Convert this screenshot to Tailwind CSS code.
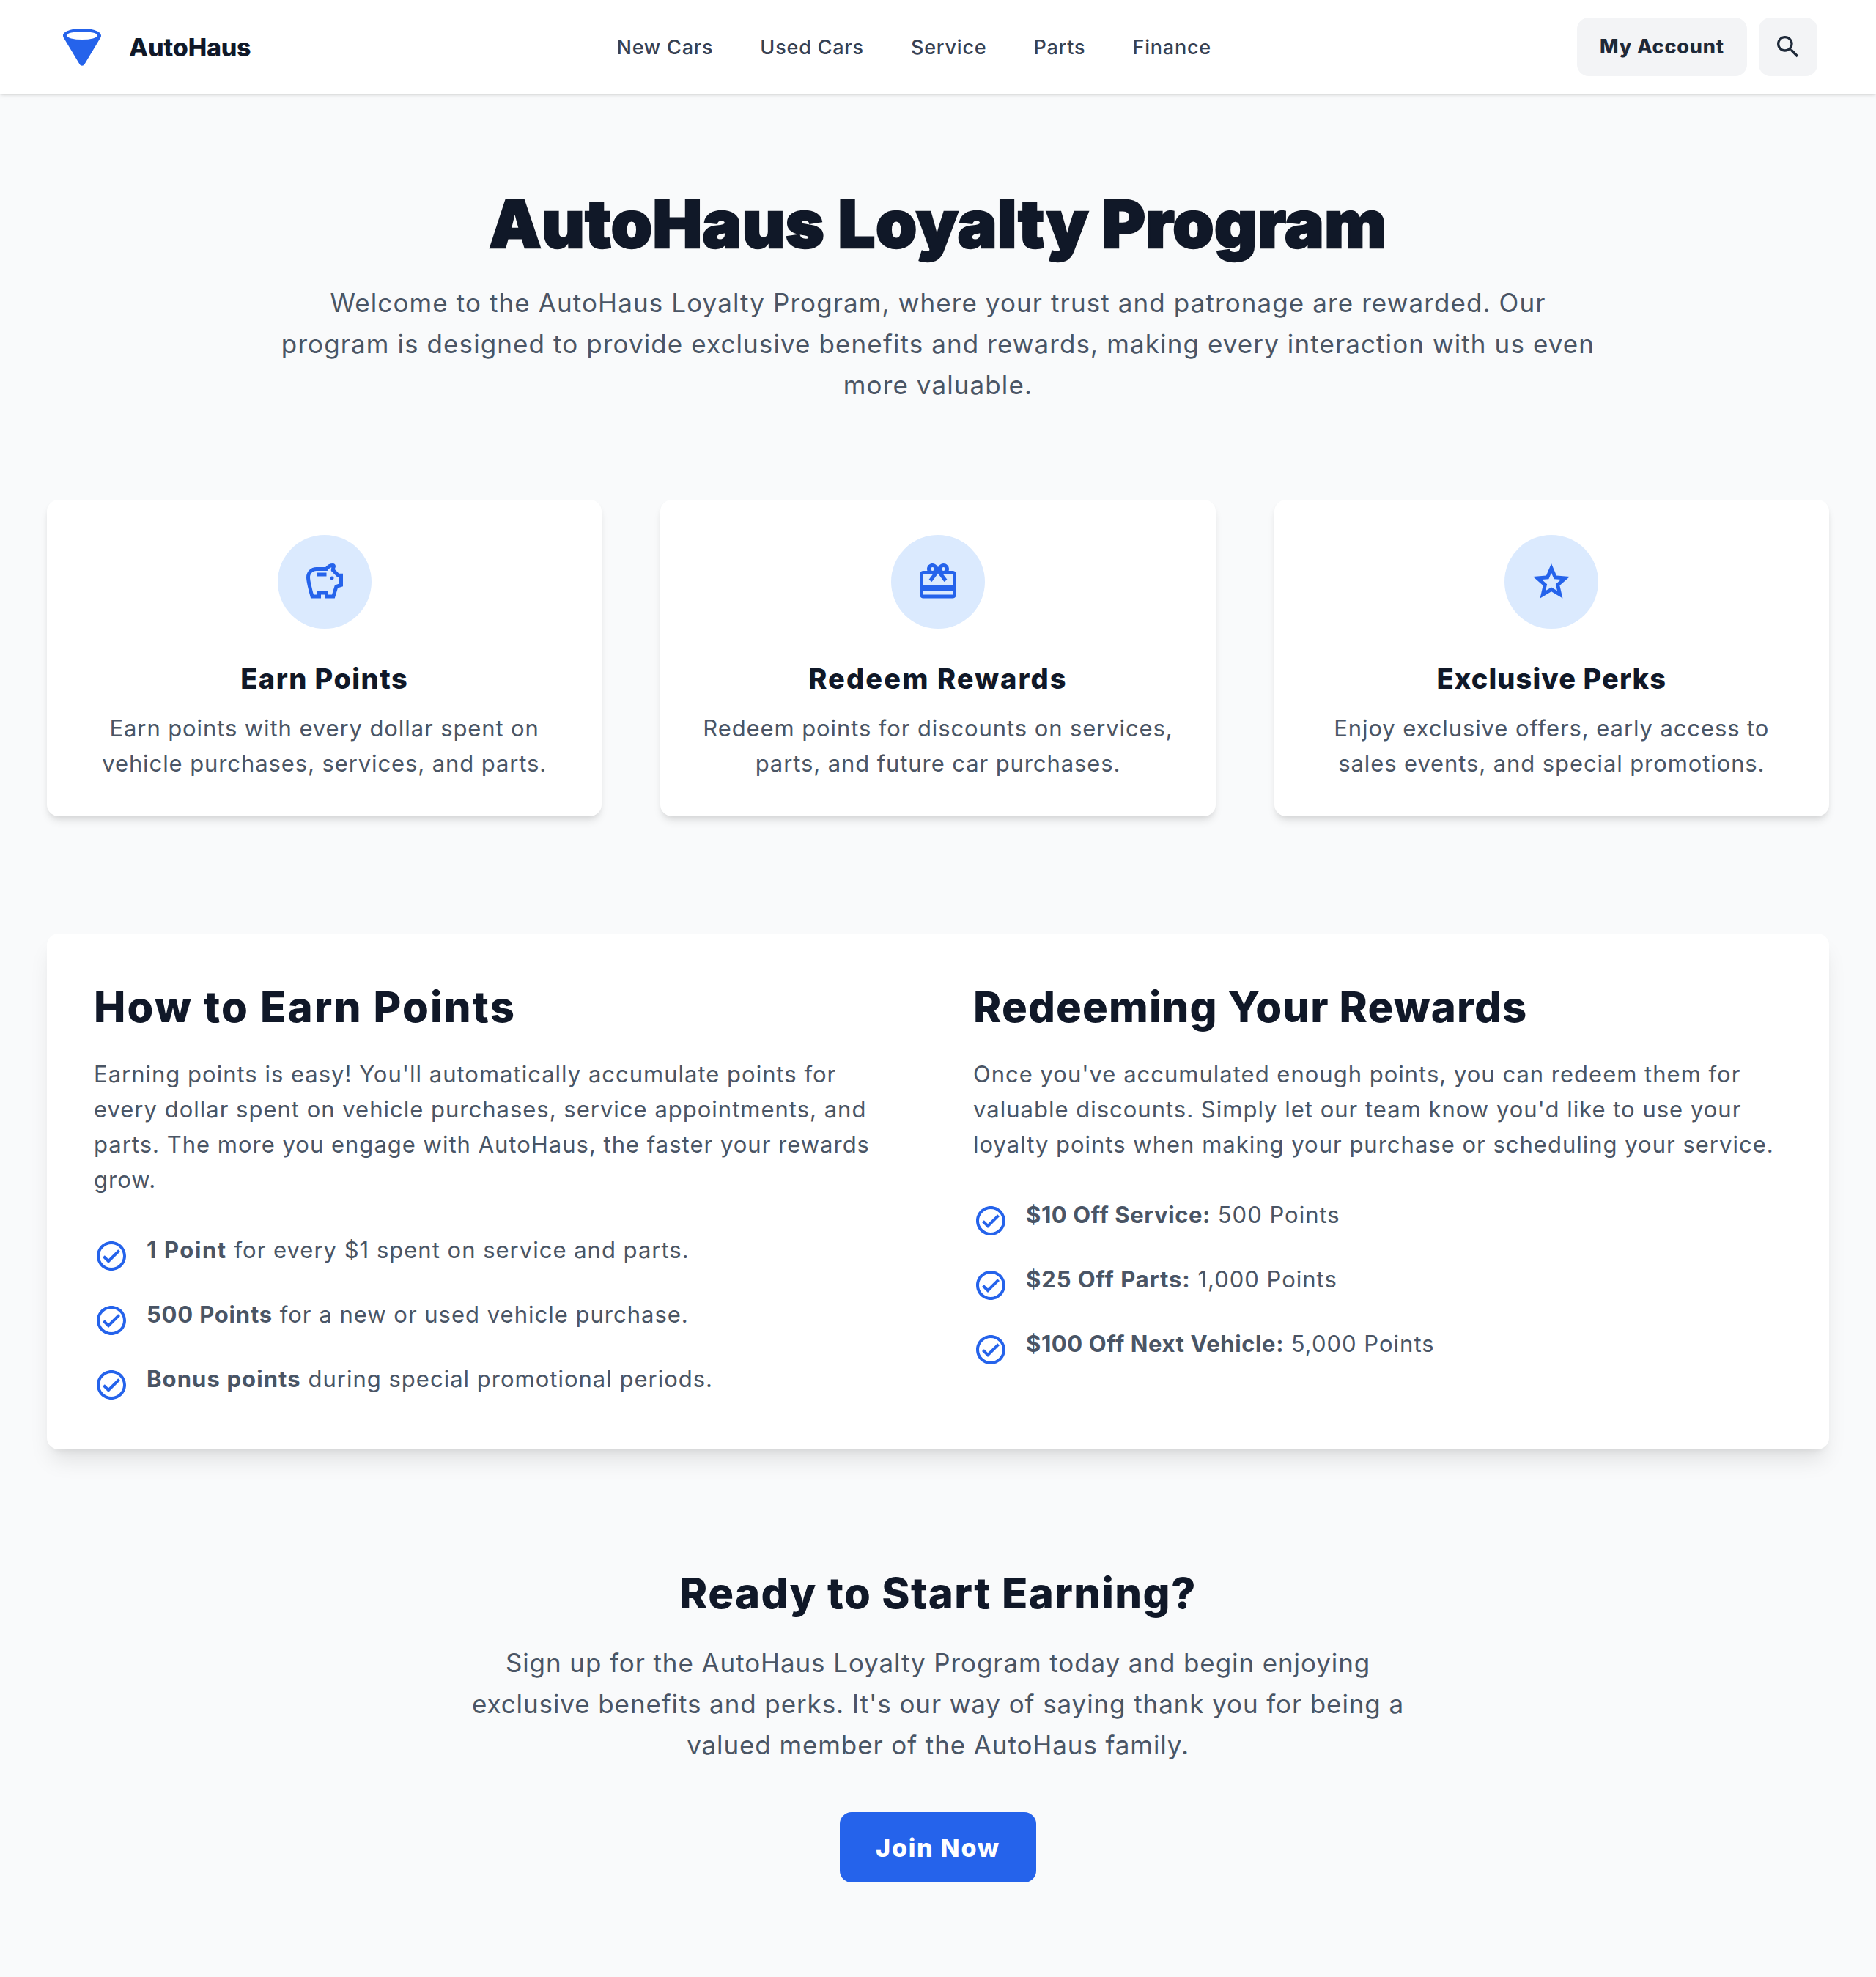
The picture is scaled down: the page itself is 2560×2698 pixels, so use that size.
<!DOCTYPE html>
<html lang="en">
<head>
  <meta charset="UTF-8">
  <title>AutoHaus Loyalty Program</title>
  <script src="https://cdn.jsdelivr.net/npm/@tailwindcss/browser@4"></script>
</head>
<body class="bg-gray-50 font-['Inter',sans-serif] text-gray-900">

  <header class="h-[128px] bg-white shadow-[0_2px_6px_0_rgb(0_0_0/0.1),0_2px_4px_-2px_rgb(0_0_0/0.1)] flex items-center justify-between pl-[85px] pr-[80px] relative">
    <div class="flex items-center gap-[37px]">
      <svg class="w-[54px] h-[54px]" viewBox="0 0 54 54" fill="none">
        <path d="M27 2C12 2 1 6 1 11.5c0 1.5.5 2.5 1.2 3.6L23.5 50.5c1.8 3 5.2 3 7 0l21.300-35.400C52.500 14 53 13 53 11.500 53 6 42 2 27 2z" fill="#2563eb"/>
        <ellipse cx="27" cy="11.500" rx="21" ry="5.500" fill="#fff"/>
      </svg>
      <span class="text-[34px] font-extrabold tracking-[-0.2px]">AutoHaus</span>
    </div>
    <nav class="flex items-center gap-[64px] pt-[2px] text-[27px] font-medium text-gray-700 tracking-[0.8px]">
      <a>New Cars</a>
      <a>Used Cars</a>
      <a>Service</a>
      <a>Parts</a>
      <a>Finance</a>
    </nav>
    <div class="flex items-center gap-[16px]">
      <button class="h-[80px] w-[232px] rounded-[16px] bg-gray-100 text-[27px] font-extrabold text-gray-800 tracking-[0.8px]">My Account</button>
      <button class="h-[80px] w-[80px] rounded-[16px] bg-gray-100 flex items-center justify-center">
        <svg class="w-[40px] h-[40px] text-gray-800" viewBox="0 0 24 24" fill="currentColor"><path d="M15.500 14h-.79l-.28-.27A6.470 6.470 0 0 0 16 9.500 6.500 6.500 0 1 0 9.500 16c1.610 0 3.090-.59 4.230-1.570l.27.280v.790l5 4.990L20.490 19l-4.990-5zm-6 0C7.010 14 5 11.990 5 9.500S7.010 5 9.500 5 14 7.010 14 9.500 11.990 14 9.500 14z"/></svg>
      </button>
    </div>
  </header>

  <main class="px-[64px] pt-[128px] pb-[128px]">
    <section class="text-center">
      <h1 class="text-[90px] leading-[100px] font-black tracking-[0.5px] [-webkit-text-stroke:2.5px_#111827]">AutoHaus Loyalty Program</h1>
      <p class="mt-[29px] mx-auto w-[1800px] text-[35px] leading-[56px] text-gray-600 tracking-[1.1px]">Welcome to the AutoHaus Loyalty Program, where your trust and patronage are rewarded. Our program is designed to provide exclusive benefits and rewards, making every interaction with us even more valuable.</p>
    </section>

    <section class="mt-[129px] grid grid-cols-3 gap-[80px]">
      <div class="bg-white rounded-[16px] shadow-[0_8px_12px_-2px_rgb(0_0_0/0.1),0_4px_8px_-4px_rgb(0_0_0/0.1)] p-[48px] text-center">
        <div class="w-[128px] h-[128px] mx-auto rounded-full bg-blue-100 flex items-center justify-center">
          <svg class="w-[60px] h-[60px] text-[#2563eb]" viewBox="0 0 24 24" fill="currentColor"><path d="M15 10c0-.55.45-1 1-1s1 .45 1 1-.45 1-1 1-1-.45-1-1zM8 9h5V7H8v2zm14-1.500v6.970l-2.820.94L17.500 21H12v-2h-2v2H4.500S2 12.540 2 9.500 4.460 4 7.500 4h5c.91-1.210 2.370-2 4-2 .83 0 1.500.67 1.500 1.500 0 .21-.04.40-.12.58-.14.32-.26.69-.32 1.090l2.270 2.330H22zm-2 2h-1l-3.500-3.500c0-.65.09-1.290.26-1.900-.97.25-1.770.92-2.210 1.790L13.500 6h-6C5.570 6 4 7.570 4 9.500c0 1.880 1.220 6.650 2.010 9.500H8v-2h6v2h2.010l1.560-5.190 2.430-.82V9.500z"/></svg>
        </div>
        <h3 class="mt-[40px] text-[38px] leading-[56px] font-extrabold tracking-[1.45px]">Earn Points</h3>
        <p class="mt-[16px] text-[31px] leading-[48px] text-gray-600 tracking-[0.9px]">Earn points with every dollar spent on vehicle purchases, services, and parts.</p>
      </div>
      <div class="bg-white rounded-[16px] shadow-[0_8px_12px_-2px_rgb(0_0_0/0.1),0_4px_8px_-4px_rgb(0_0_0/0.1)] p-[48px] text-center">
        <div class="w-[128px] h-[128px] mx-auto rounded-full bg-blue-100 flex items-center justify-center">
          <svg class="w-[60px] h-[60px] text-[#2563eb]" viewBox="0 0 24 24" fill="currentColor"><path d="M20 6h-2.180c.11-.31.18-.65.18-1 0-1.660-1.340-3-3-3-1.050 0-1.960.54-2.500 1.350l-.5.67-.5-.68C10.960 2.540 10.050 2 9 2 7.340 2 6 3.340 6 5c0 .35.07.69.18 1H4c-1.110 0-1.990.89-1.990 2L2 19c0 1.110.89 2 2 2h16c1.110 0 2-.89 2-2V8c0-1.110-.89-2-2-2zm-5-2c.55 0 1 .45 1 1s-.45 1-1 1-1-.45-1-1 .45-1 1-1zM9 4c.55 0 1 .45 1 1s-.45 1-1 1-1-.45-1-1 .45-1 1-1zm11 15H4v-2h16v2zm0-5H4V8h5.080L7 10.830 8.620 12 11 8.760l1-1.360 1 1.360L15.380 12 17 10.830 14.920 8H20v6z"/></svg>
        </div>
        <h3 class="mt-[40px] text-[38px] leading-[56px] font-extrabold tracking-[2.1px]">Redeem Rewards</h3>
        <p class="mt-[16px] text-[31px] leading-[48px] text-gray-600 tracking-[0.9px]">Redeem points for discounts on services, parts, and future car purchases.</p>
      </div>
      <div class="bg-white rounded-[16px] shadow-[0_8px_12px_-2px_rgb(0_0_0/0.1),0_4px_8px_-4px_rgb(0_0_0/0.1)] p-[48px] text-center">
        <div class="w-[128px] h-[128px] mx-auto rounded-full bg-blue-100 flex items-center justify-center">
          <svg class="w-[60px] h-[60px] text-[#2563eb]" viewBox="0 0 24 24" fill="currentColor" fill-rule="evenodd"><path d="M22 9.240l-7.190-.62L12 2 9.190 8.630 2 9.240l5.460 4.730L5.820 21 12 17.270 18.180 21l-1.630-7.030L22 9.240zM12 14.980L8.800 16.910 9.650 13.270 6.830 10.820 10.560 10.500 12 7.070 13.450 10.500 17.170 10.830 14.350 13.280 15.200 16.920z"/></svg>
        </div>
        <h3 class="mt-[40px] text-[38px] leading-[56px] font-extrabold tracking-[1.1px]">Exclusive Perks</h3>
        <p class="mt-[16px] text-[31px] leading-[48px] text-gray-600 tracking-[0.9px]">Enjoy exclusive offers, early access to sales events, and special promotions.</p>
      </div>
    </section>

    <section class="mt-[160px] bg-white rounded-[16px] shadow-[0_20px_30px_-6px_rgb(0_0_0/0.1),0_8px_12px_-8px_rgb(0_0_0/0.1)] p-[64px] grid grid-cols-2 gap-[96px]">
      <div>
        <h2 class="text-[58px] leading-[72px] font-extrabold tracking-[2.2px]">How to Earn Points</h2>
        <p class="mt-[32px] pr-[20px] text-[31px] leading-[48px] text-gray-600 tracking-[1px]">Earning points is easy! You'll automatically accumulate points for every dollar spent on vehicle purchases, service appointments, and parts. The more you engage with AutoHaus, the faster your rewards grow.</p>
        <ul class="mt-[48px] flex flex-col gap-[32px] text-[31px] leading-[48px] text-gray-600 tracking-[1px]">
          <li class="flex gap-[24px]">
            <svg class="w-[48px] h-[48px] mt-[8px] shrink-0 text-[#2563eb]" viewBox="0 0 24 24" fill="currentColor"><path d="M12 2C6.480 2 2 6.480 2 12s4.480 10 10 10 10-4.480 10-10S17.520 2 12 2zm0 18c-4.410 0-8-3.590-8-8s3.590-8 8-8 8 3.590 8 8-3.590 8-8 8zm4.590-12.420L10 14.170l-2.590-2.580L6 13l4 4 8-8z"/></svg>
            <span><b class="font-bold tracking-[1.6px]">1 Point</b> for every $1 spent on service and parts.</span>
          </li>
          <li class="flex gap-[24px]">
            <svg class="w-[48px] h-[48px] mt-[8px] shrink-0 text-[#2563eb]" viewBox="0 0 24 24" fill="currentColor"><path d="M12 2C6.480 2 2 6.480 2 12s4.480 10 10 10 10-4.480 10-10S17.520 2 12 2zm0 18c-4.410 0-8-3.590-8-8s3.590-8 8-8 8 3.590 8 8-3.590 8-8 8zm4.590-12.420L10 14.170l-2.590-2.580L6 13l4 4 8-8z"/></svg>
            <span><b class="font-bold tracking-[0.8px]">500 Points</b> for a new or used vehicle purchase.</span>
          </li>
          <li class="flex gap-[24px]">
            <svg class="w-[48px] h-[48px] mt-[8px] shrink-0 text-[#2563eb]" viewBox="0 0 24 24" fill="currentColor"><path d="M12 2C6.480 2 2 6.480 2 12s4.480 10 10 10 10-4.480 10-10S17.520 2 12 2zm0 18c-4.410 0-8-3.590-8-8s3.590-8 8-8 8 3.590 8 8-3.590 8-8 8zm4.590-12.420L10 14.170l-2.590-2.580L6 13l4 4 8-8z"/></svg>
            <span><b class="font-bold tracking-[1.1px]">Bonus points</b> during special promotional periods.</span>
          </li>
        </ul>
      </div>
      <div>
        <h2 class="text-[58px] leading-[72px] font-extrabold tracking-[1.15px]">Redeeming Your Rewards</h2>
        <p class="mt-[32px] text-[31px] leading-[48px] text-gray-600 tracking-[1px]">Once you've accumulated enough points, you can redeem them for valuable discounts. Simply let our team know you'd like to use your loyalty points when making your purchase or scheduling your service.</p>
        <ul class="mt-[48px] flex flex-col gap-[32px] text-[31px] leading-[48px] text-gray-600 tracking-[1px]">
          <li class="flex gap-[24px]">
            <svg class="w-[48px] h-[48px] mt-[8px] shrink-0 text-[#2563eb]" viewBox="0 0 24 24" fill="currentColor"><path d="M12 2C6.480 2 2 6.480 2 12s4.480 10 10 10 10-4.480 10-10S17.520 2 12 2zm0 18c-4.410 0-8-3.590-8-8s3.590-8 8-8 8 3.590 8 8-3.590 8-8 8zm4.590-12.420L10 14.170l-2.590-2.580L6 13l4 4 8-8z"/></svg>
            <span><b class="font-bold tracking-[0.6px]">$10 Off Service:</b> 500 Points</span>
          </li>
          <li class="flex gap-[24px]">
            <svg class="w-[48px] h-[48px] mt-[8px] shrink-0 text-[#2563eb]" viewBox="0 0 24 24" fill="currentColor"><path d="M12 2C6.480 2 2 6.480 2 12s4.480 10 10 10 10-4.480 10-10S17.520 2 12 2zm0 18c-4.410 0-8-3.590-8-8s3.590-8 8-8 8 3.590 8 8-3.590 8-8 8zm4.590-12.420L10 14.170l-2.590-2.580L6 13l4 4 8-8z"/></svg>
            <span><b class="font-bold tracking-[0.95px]">$25 Off Parts:</b> 1,000 Points</span>
          </li>
          <li class="flex gap-[24px]">
            <svg class="w-[48px] h-[48px] mt-[8px] shrink-0 text-[#2563eb]" viewBox="0 0 24 24" fill="currentColor"><path d="M12 2C6.480 2 2 6.480 2 12s4.480 10 10 10 10-4.480 10-10S17.520 2 12 2zm0 18c-4.410 0-8-3.590-8-8s3.590-8 8-8 8 3.590 8 8-3.590 8-8 8zm4.590-12.420L10 14.170l-2.590-2.580L6 13l4 4 8-8z"/></svg>
            <span><b class="font-bold tracking-[0.6px]">$100 Off Next Vehicle:</b> 5,000 Points</span>
          </li>
        </ul>
      </div>
    </section>

    <section class="mt-[160px] text-center">
      <h2 class="text-[58px] leading-[72px] font-extrabold tracking-[1.4px]">Ready to Start Earning?</h2>
      <p class="mt-[31px] mx-auto w-[1300px] text-[35px] leading-[56px] text-gray-600 tracking-[0.9px]">Sign up for the AutoHaus Loyalty Program today and begin enjoying exclusive benefits and perks. It's our way of saying thank you for being a valued member of the AutoHaus family.</p>
      <button class="mt-[64px] w-[268px] h-[96px] rounded-[16px] bg-[#2563eb] text-white text-[34px] font-extrabold tracking-[1.75px]">Join Now</button>
    </section>
  </main>

</body>
</html>
